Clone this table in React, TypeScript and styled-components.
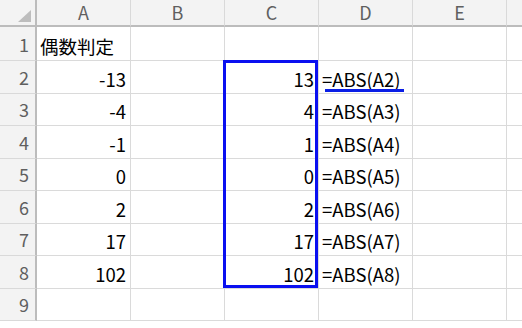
import React from 'react'
import styled, { createGlobalStyle } from 'styled-components'

const GlobalStyle = createGlobalStyle`
  html, body {
    margin: 0;
    padding: 0;
    background: #ffffff;
    overflow: hidden;
  }
  body {
    font-family: "Noto Sans CJK JP", "Noto Sans", sans-serif;
  }
`

const COLUMNS = ['A', 'B', 'C', 'D', 'E', '']

type Align = 'left' | 'right'

interface CellData {
  text?: string
  align?: Align
  underline?: boolean
}

const values = [-13, -4, -1, 0, 2, 17, 102]

// rows 1..9 of the sheet, columns A..F
const rows: CellData[][] = [
  [{ text: '偶数判定', align: 'left' }, {}, {}, {}, {}, {}],
  ...values.map((v, i) => [
    { text: String(v), align: 'right' as Align },
    {},
    { text: String(Math.abs(v)), align: 'right' as Align },
    { text: `=ABS(A${i + 2})`, align: 'left' as Align, underline: i === 0 },
    {},
    {}
  ]),
  [{}, {}, {}, {}, {}, {}]
]

const Sheet = styled.div`
  display: grid;
  grid-template-columns: 37px repeat(6, 94px);
  grid-template-rows: 27px 34px repeat(8, 32.5px) 32px;
  width: 522px;
  height: 328px;
  overflow: hidden;
  background: #ffffff;
`

// every part of the sheet sits at an explicit row/column so the
// selection frame can share grid tracks with the cells under it
const Placed = styled.div<{ $row: number; $col: number }>`
  grid-row: ${({ $row }) => $row};
  grid-column: ${({ $col }) => $col};
  box-sizing: border-box;
`

const Corner = styled(Placed)`
  position: relative;
  background: #f3f3f3;
  border-right: 2px solid #bcbcbc;
  border-bottom: 2px solid #bcbcbc;

  &::after {
    content: '';
    position: absolute;
    right: 4px;
    bottom: 3px;
    width: 0;
    height: 0;
    border-left: 13px solid transparent;
    border-bottom: 12px solid #bdbdbd;
  }
`

const ColHeader = styled(Placed)`
  display: flex;
  align-items: center;
  justify-content: center;
  background: #f3f3f3;
  border-right: 1px solid #d9d9d9;
  border-bottom: 2px solid #bcbcbc;
  color: #5f5f5f;
  font-size: 18px;
  padding-bottom: 1px;
`

const RowHeader = styled(Placed)`
  display: flex;
  align-items: center;
  justify-content: flex-end;
  padding-right: 6px;
  background: #f3f3f3;
  border-right: 2px solid #bcbcbc;
  border-bottom: 1px solid #d9d9d9;
  color: #5f5f5f;
  font-size: 18px;
`

const Cell = styled(Placed)<{ $align: Align }>`
  position: relative;
  display: flex;
  align-items: flex-end;
  justify-content: ${({ $align }) => ($align === 'right' ? 'flex-end' : 'flex-start')};
  padding: 0 4px 2px 3px;
  border-right: 1px solid #dadada;
  border-bottom: 1px solid #dadada;
  color: #000000;
  font-size: 18.5px;
  line-height: 24px;
  white-space: nowrap;
`

const Underline = styled.div`
  position: absolute;
  left: 6px;
  top: 28px;
  width: 79px;
  height: 2.5px;
  background: #0a1ee6;
`

const Selection = styled.div`
  grid-column: 4;
  grid-row: 3 / 10;
  margin: -1px 1px 1px -2px;
  border: 3px solid #0a10f0;
  pointer-events: none;
  z-index: 2;
`

export default function App() {
  return (
    <>
      <GlobalStyle />
      <Sheet>
        <Corner $row={1} $col={1} />
        {COLUMNS.map((c, i) => (
          <ColHeader key={`h-${i}`} $row={1} $col={i + 2}>
            {c}
          </ColHeader>
        ))}
        {rows.map((row, r) => (
          <React.Fragment key={`r-${r}`}>
            <RowHeader $row={r + 2} $col={1}>
              {r + 1}
            </RowHeader>
            {row.map((cell, c) => (
              <Cell key={`c-${r}-${c}`} $row={r + 2} $col={c + 2} $align={cell.align ?? 'left'}>
                {cell.text}
                {cell.underline && <Underline />}
              </Cell>
            ))}
          </React.Fragment>
        ))}
        <Selection />
      </Sheet>
    </>
  )
}
